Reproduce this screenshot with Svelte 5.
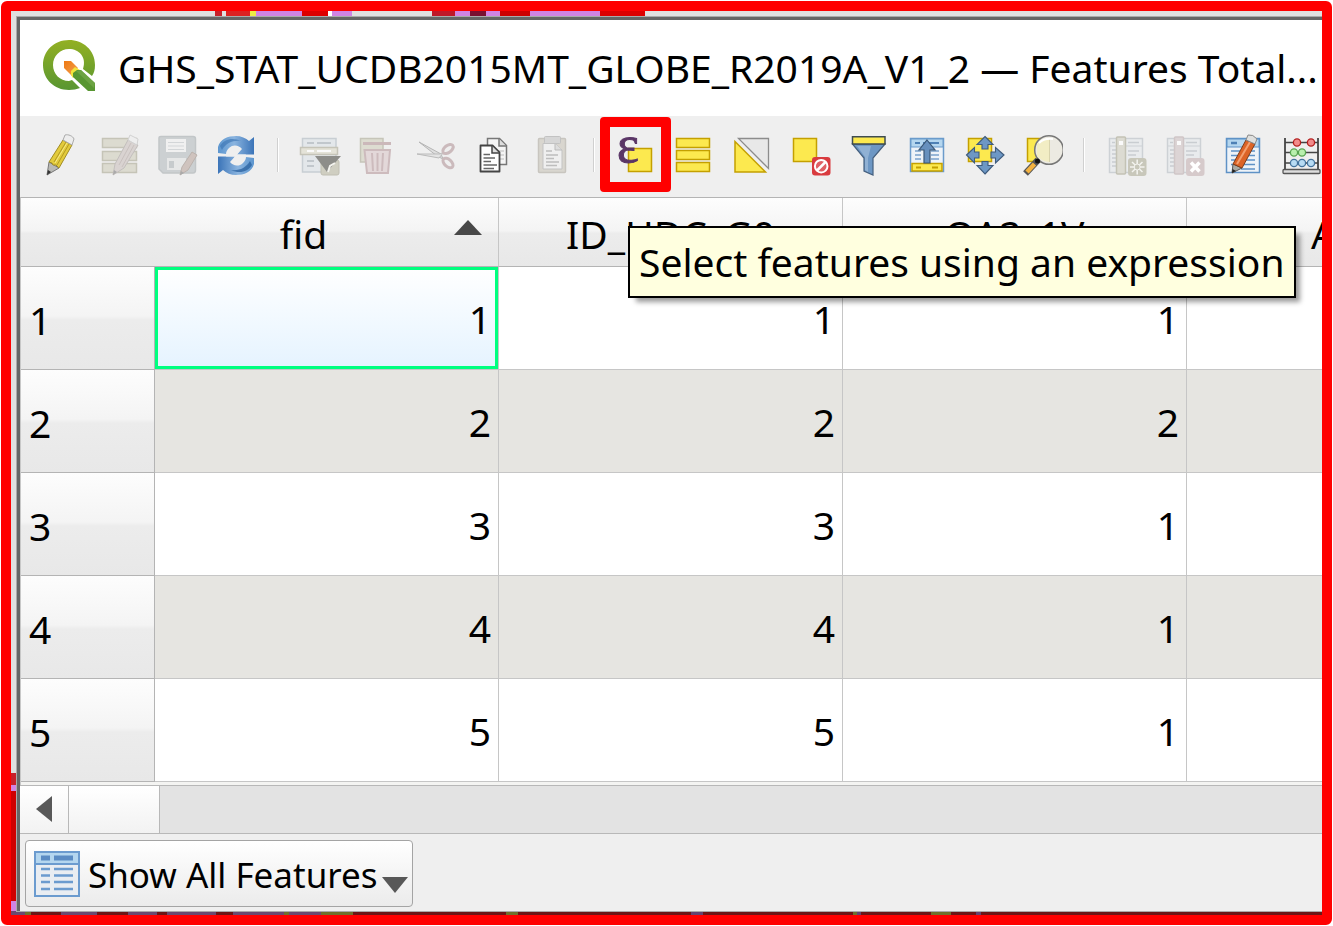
<script>
  const groups = [
    ['edit', 'multiedit', 'save', 'reload'],
    ['add', 'delete', 'cut', 'copy', 'paste'],
    ['expression', 'all', 'invert', 'deselect', 'filter', 'top', 'pan', 'zoom'],
    ['newfield', 'deletefield', 'form', 'calculator']
  ];
  const labels = {
    edit: 'Toggle editing mode', multiedit: 'Toggle multi edit mode', save: 'Save edits', reload: 'Reload the table',
    add: 'Add feature', delete: 'Delete selected features', cut: 'Cut', copy: 'Copy', paste: 'Paste',
    expression: 'Select features using an expression', all: 'Select all', invert: 'Invert selection',
    deselect: 'Deselect all', filter: 'Filter', top: 'Move selection to top', pan: 'Pan map to selected rows',
    zoom: 'Zoom map to selected rows', newfield: 'New field', deletefield: 'Delete field',
    form: 'Organize columns', calculator: 'Open field calculator'
  };
  const disabled = ['multiedit', 'save', 'add', 'delete', 'cut', 'paste', 'newfield', 'deletefield'];
  const rows = [
    [1, 1, 1, 1],
    [2, 2, 2, 2],
    [3, 3, 3, 1],
    [4, 4, 4, 1],
    [5, 5, 5, 1]
  ];
</script>

{#snippet icon(name)}
  <svg class="icon" viewBox="0 0 44 44" aria-hidden="true">
    {#if name === 'edit'}
      <path d="M8 42 10 29 20 35z" fill="#b9b9b5" stroke="#777" />
      <path d="M8 42 9 37 12 39z" fill="#333" />
      <path d="M10 29 24 7 33 12 20 35 17 32 14 32 13 30z" fill="#e3cb3c" stroke="#a18c25" />
      <path d="M15 29 27 9M18 32 30 11" stroke="#b39a24" />
      <path d="M16 30 28 10" stroke="#f7ea86" />
      <path d="M24 7 26 2C29 1 34 3 35 6L33 12z" fill="#ededed" stroke="#aaa" />
    {:else if name === 'multiedit'}
      <g fill="#dcdbd0" stroke="#c5c4b7" stroke-width="1.5">
        <path d="M5.500 5.500H39.500V14.500H5.500zM5.500 18.500H39.500V27.500H5.500zM5.500 30.500H39.500V39.500H5.500z" />
      </g>
      <path d="M16 42 18 31 31 7 41 12 27 35z" fill="#d9d3d1" stroke="#c3bfbd" />
      <path d="M22 32 34 10M25 34 37 12" stroke="#c9c1bf" />
      <path d="M16 42 17 37 20 39z" fill="#aaa" />
      <path d="M31 7 33 2 41 6 40 12z" fill="#eee" stroke="#d2d2d2" />
    {:else if name === 'save'}
      <path d="M4 5Q4 3.500 6 3.500H38Q40.500 3.500 40.500 6V37Q40.500 40 38 40H8L4 36z" fill="#ccd0d2" stroke="#c2c6c8" stroke-width="1.500" />
      <path d="M11 6H31V19H11z" fill="#f0f0f0" />
      <path d="M13 9.500H29M13 13H29M13 16.500H29" stroke="#d3d6d8" />
      <path d="M12 25H31V37H12z" fill="#e6e7e7" />
      <path d="M14 28H19V35H14z" fill="#c7cbcd" />
      <path d="M25 42 27 34 37 19 42 22 33 37z" fill="#cfc3be" stroke="#bbb2ad" />
      <path d="M25 42 26 38 29 40z" fill="#aaa" />
    {:else if name === 'reload'}
      <defs>
        <linearGradient id="sync" x1="0" y1="0" x2="1" y2="0">
          <stop offset="0" stop-color="#5d96cf" /><stop offset=".45" stop-color="#8ab4df" /><stop offset="1" stop-color="#3b74b8" />
        </linearGradient>
      </defs>
      <path d="M5 14C7 6 15 3 23 3 28 3 33 5 36 8L41 4V21.500H24L29 16C26 12 20 11 16 15 14 17 13 19 13 21L5 20z" fill="url(#sync)" />
      <path d="M7 13C11 6 20 4 28 8 20 7 13 10 9 17z" fill="#3c74b4" opacity=".65" />
      <g transform="rotate(180 23 22.500)">
        <path d="M5 14C7 6 15 3 23 3 28 3 33 5 36 8L41 4V21.500H24L29 16C26 12 20 11 16 15 14 17 13 19 13 21L5 20z" fill="url(#sync)" />
        <path d="M7 13C11 6 20 4 28 8 20 7 13 10 9 17z" fill="#28609f" opacity=".75" />
      </g>
      <path d="M16 16Q21 12 28 16L24 21.500H33Q30 31 18 30L22 23.500H13z" fill="#efefef" />
    {:else if name === 'add'}
      <path d="M5.500 5.500H39V39H5.500z" fill="#e3e7ea" stroke="#c8ced3" stroke-width="1.500" />
      <path d="M10 10H17M20 10H34M10 28H17M10 33H17" stroke="#c1c7cc" stroke-width="2" />
      <path d="M3.500 14.500H40.500V21.500H3.500z" fill="#e4e3d8" stroke="#c5c4b8" stroke-width="1.500" />
      <path d="M10 18H17M20 18H34" stroke="#fafafa" stroke-width="2" />
      <rect x="24" y="27" width="18" height="15" rx="2" fill="#cfcec1" stroke="#c0bfb2" />
      <path d="M18 23H44L30 39z" fill="#8d8d89" />
      <path d="M31 39 33 33 38 30" stroke="#f3f3ee" stroke-width="2" fill="none" />
    {:else if name === 'delete'}
      <path d="M5.500 5.500H28V29H5.500z" fill="#dddcd1" stroke="#c6c5b9" stroke-width="1.500" />
      <path d="M8 10.500H36" stroke="#cbb8ba" stroke-width="3" />
      <path d="M9.500 17H35L33 40H12z" fill="#e3d8d9" stroke="#cdbbbd" stroke-width="2" />
      <path d="M17 20 18 38M22.500 20V38M28 20 27 38" stroke="#cdbbbd" stroke-width="2" />
    {:else if name === 'cut'}
      <path d="M6 9 28 21 30 26 24 23z" fill="#dedede" stroke="#b5b5b5" />
      <path d="M4 21 27 21 31 19 26 25z" fill="#e4e4e4" stroke="#bbb" />
      <g fill="none" stroke="#cbbabc" stroke-width="3">
        <ellipse cx="35" cy="16" rx="6" ry="3.500" transform="rotate(-38 35 16)" />
        <ellipse cx="35" cy="30" rx="6" ry="3.500" transform="rotate(42 35 30)" />
      </g>
    {:else if name === 'copy'}
      <path d="M16.500 5.500H28.500L35.500 12.500V31.500H16.500z" fill="#f5f5f5" stroke="#777" stroke-width="1.500" />
      <path d="M28 6V13H35" fill="#ddd" stroke="#777" stroke-width="1.500" />
      <path d="M27 18H33M29 22H33M29 26H33" stroke="#bbb" />
      <path d="M9.500 12.500H21.500L28.500 19.500V38.500H9.500z" fill="#fff" stroke="#444" stroke-width="1.800" stroke-linejoin="round" />
      <path d="M21 13V20H28" fill="#ddd" stroke="#444" stroke-width="1.500" />
      <path d="M12.500 21.500H19M12.500 25H24M12.500 28.500H20M12.500 32H26M12.500 35.500H23" stroke="#666" stroke-width="1.300" />
    {:else if name === 'paste'}
      <rect x="9.500" y="5.500" width="27" height="34" rx="1" fill="#d9d6cf" stroke="#c8c5bf" stroke-width="1.500" />
      <path d="M14 10.500H26L33 17V36H14z" fill="#efefef" stroke="#c3c3c3" />
      <rect x="15.500" y="3.500" width="16" height="7" rx="1" fill="#d6d6d6" stroke="#c2c2c2" />
      <path d="M26 11V17H33" fill="#ddd" stroke="#bbb" />
      <path d="M17 18H23M17 22H29M17 25.500H25M17 29H30M17 32.500H28" stroke="#bdbdbd" stroke-width="1.300" />
    {:else if name === 'expression'}
      <path d="M15.500 15.500H38.500V38.500H15.500z" fill="#fce94f" stroke="#c4a000" stroke-width="1.500" />
      <text class="epsilon" x="4" y="29">ε</text>
    {:else if name === 'all'}
      <path d="M5.500 5.500H38.500V14.500H5.500zM5.500 17.500H38.500V26.500H5.500zM5.500 29.500H38.500V38.500H5.500z" fill="#fce94f" stroke="#c4a000" stroke-width="1.500" />
    {:else if name === 'invert'}
      <path d="M9.500 5.500H39.500V35.500z" fill="#e8e8e8" stroke="#8c8c8c" stroke-width="1.300" />
      <path d="M6 8.500V39H36.500z" fill="#fce94f" stroke="#c4a000" stroke-width="1.500" />
    {:else if name === 'deselect'}
      <path d="M6.500 5.500H29.500V28.500H6.500z" fill="#fce94f" stroke="#c4a000" stroke-width="1.500" />
      <rect x="25" y="24" width="18.500" height="18.500" rx="3" fill="#d93b3f" />
      <circle cx="34.200" cy="33.200" r="6.300" fill="#df6064" stroke="#fff" stroke-width="2" />
      <path d="M30 37.500 38.500 29" stroke="#fff" stroke-width="2.500" />
    {:else if name === 'filter'}
      <path d="M7.500 11 19 25V38L28 42V25L40 11z" fill="#6d97c4" stroke="#45607f" stroke-width="1.200" />
      <path d="M12 13H26L23 25V39L20 37V24z" fill="#a8c3e0" opacity=".6" />
      <path d="M7.500 3.800H40V11H7.500z" fill="#fce94f" stroke="#3f4c50" stroke-width="1.500" />
    {:else if name === 'top'}
      <path d="M7.500 5.500H40.500V38.500H7.500z" fill="#eef3f8" stroke="#6b9bcb" stroke-width="1.500" />
      <path d="M8 6H40V14H8z" fill="#b4d6ef" stroke="#6b9bcb" />
      <path d="M12 10H17M20 10H36" stroke="#4d80b5" stroke-width="2" />
      <path d="M12 18H18M28 18H36M12 22H18M28 22H36M12 26H18M28 26H36" stroke="#7ba2cb" stroke-width="1.500" />
      <path d="M9 30.500H39V38H9z" fill="#fce94f" stroke="#c4a000" stroke-width="1.500" />
      <path d="M13 34.500H18M29 34.500H35" stroke="#c4a000" stroke-width="2" />
      <path d="M24 7 32 17H27V30H21V17H16z" fill="#6790bd" stroke="#3b5877" stroke-width="1.200" />
    {:else if name === 'pan'}
      <path d="M7.500 5.500H30.500V28.500H7.500z" fill="#fce94f" stroke="#c4a000" stroke-width="1.500" />
      <g fill="#6d97c4" stroke="#3f5b7c" stroke-width="1.100">
        <path d="M24 3.500 32 11.500H27V16H21V11.500H16z" />
        <path d="M24 41 32 32.500H27V28.500H21V32.500H16z" />
        <path d="M5.500 22 13.500 14.500V19H18V25H13.500V30z" />
        <path d="M43 22 34.500 14.500V19H30V25H34.500V30z" />
      </g>
    {:else if name === 'zoom'}
      <path d="M8.500 5.500H31.500V28.500H8.500z" fill="#fce94f" stroke="#c4a000" stroke-width="1.500" />
      <path d="M19 27 6.500 40.500" stroke="#555" stroke-width="6.500" />
      <path d="M15.500 31 8 39" stroke="#f3b240" stroke-width="4.500" />
      <circle cx="30" cy="17" r="14.300" fill="#eceae2" stroke="#777" stroke-width="1.500" />
      <path d="M18 11Q23 4 30 5V29Q22 28 18 23z" fill="#f2edc4" />
      <path d="M30 5H31V29H30z" fill="#d8d3ad" />
      <path d="M20 10Q25 5 34 6" stroke="#fff" stroke-width="2" fill="none" />
      <circle cx="18.500" cy="28" r="2.500" fill="#111" />
    {:else if name === 'newfield' || name === 'deletefield'}
      <path d="M6.500 5.500H39.500V39.500H6.500z" fill="#e9ebed" stroke="#cdd1d5" stroke-width="1.500" />
      <path d="M7 13H39" stroke="#cdd1d5" />
      <path d="M25 9.500H36M9 9.500H12M9 17H13M9 21H13M9 25H13M9 29H13M9 33H13M25 18H36M25 22H33" stroke="#c9cdd1" stroke-width="1.500" />
      {#if name === 'newfield'}
        <rect x="13.500" y="4" width="9" height="37" rx="1" fill="#dcdbd2" stroke="#c3c2b5" stroke-width="1.500" />
        <rect x="25" y="25" width="18.500" height="18" rx="3" fill="#c8c7ba" />
        <path d="M34.200 26.500V41.500M27 34H41.500M29 29 39.500 39M39.500 29 29 39" stroke="#f4f4f0" stroke-width="1.500" />
        <circle cx="34.200" cy="34" r="3" fill="#c8c7ba" stroke="#f4f4f0" />
      {:else}
        <rect x="13.500" y="4" width="9" height="37" rx="1" fill="#dcd4d5" stroke="#d0c6c7" stroke-width="1.500" />
        <rect x="25" y="25" width="18.500" height="18" rx="3" fill="#d6cacb" />
        <path d="M30 29.500 38.500 38.500M38.500 29.500 30 38.500" stroke="#fff" stroke-width="3.500" />
      {/if}
      <path d="M16 8H20V12H16z" fill="#fafafa" />
    {:else if name === 'form'}
      <path d="M7.500 5.500H40.500V39.500H7.500z" fill="#eef3f8" stroke="#5f92c6" stroke-width="1.500" />
      <path d="M8 6H40V14H8z" fill="#b4d6ef" stroke="#5f92c6" />
      <path d="M12 10H18" stroke="#4d80b5" stroke-width="2.500" />
      <path d="M12 18H21M31 18H36M12 22.500H19M29 22.500H36M12 27H17M26 27H36M12 31.500H15M25 31.500H36M22 36H36" stroke="#5f92c6" stroke-width="1.500" />
      <path d="M13 40 14 31 23 35z" fill="#a9aaa5" stroke="#555" />
      <path d="M13 40 13.500 36 17 38z" fill="#222" />
      <path d="M14 31 27 7 36 11 23 35z" fill="#dc6427" stroke="#7d3c19" />
      <path d="M18 31 31 9" stroke="#f3a070" stroke-width="2" />
      <path d="M27 7 29 2Q34 1 38 6L36 11z" fill="#dfdfdd" stroke="#888" />
    {:else if name === 'calculator'}
      <path d="M8 5V37M41 5V37" stroke="#555" stroke-width="2" />
      <path d="M8 9.500H41M8 19.500H41M8 30H41" stroke="#444" stroke-width="1.500" />
      <rect x="6" y="36.500" width="37" height="4" rx="1" fill="#ddd" stroke="#555" stroke-width="1.300" />
      <g fill="#f28b8b" stroke="#b51f1f" stroke-width="1.300"><circle cx="20" cy="9.500" r="3.600" /><circle cx="34" cy="9.500" r="3.600" /></g>
      <g fill="#b9f0ae" stroke="#59a552" stroke-width="1.300"><circle cx="17" cy="19.500" r="3.600" /><circle cx="25" cy="19.500" r="3.600" /></g>
      <g fill="#b8dcf4" stroke="#45749d" stroke-width="1.300"><circle cx="17" cy="30" r="3.600" /><circle cx="25" cy="30" r="3.600" /><circle cx="34" cy="30" r="3.600" /></g>
    {/if}
  </svg>
{/snippet}

<main class="frame">
  <section class="window">
    <header class="titlebar">
      <svg class="logo" viewBox="0 0 54 54" aria-hidden="true">
        <defs>
          <linearGradient id="ring" x1="0" y1="0" x2="0" y2="1">
            <stop offset="0" stop-color="#93b023" /><stop offset="1" stop-color="#589632" />
          </linearGradient>
          <linearGradient id="tip" x1="0" y1="0" x2="1" y2="1">
            <stop offset="0" stop-color="#ee7913" /><stop offset="1" stop-color="#f3a050" />
          </linearGradient>
        </defs>
        <path d="M27 1C41 1 53 11 53 26 53 31 52 34 50 37L41 30C45 18 37 10 27 10 18 10 11 17 11 26 11 35 18 42 27 42L30 41 38 49C35 50 31 51 27 51 12 51 1 40 1 26 1 12 12 1 27 1z" fill="url(#ring)" />
        <path d="M22 22H29L36 29 30 37 22 29z" fill="url(#tip)" />
        <path d="M29 36V32L33 28 38 31 31 39z" fill="#f2e33c" />
        <path d="M31 38V34L35 31H39L53 44V52H46z" fill="#589632" />
        <path d="M34 32 39 31 53 44 52 49z" fill="#7aab4f" opacity=".6" />
      </svg>
      <h1>GHS_STAT_UCDB2015MT_GLOBE_R2019A_V1_2 — Features Total...</h1>
    </header>

    <div class="toolbar" role="toolbar" aria-label="Attribute table">
      {#each groups as group, g}
        {#if g > 0}<span class="separator"></span>{/if}
        {#each group as name}
          <div class="tool" class:marked={name === 'expression'}>
            <button type="button" aria-label={labels[name]} disabled={disabled.includes(name)}>{@render icon(name)}</button>
            {#if name === 'expression'}
              <div class="tooltip" role="tooltip">Select features using an expression</div>
            {/if}
          </div>
        {/each}
      {/each}
    </div>

    <div class="grid">
      <table>
        <colgroup><col class="index" /><col class="field" /><col class="field" /><col class="field" /><col /></colgroup>
        <thead>
          <tr>
            <th></th>
            <th class="sorted" aria-sort="ascending">fid<span class="arrow-up"></span></th>
            <th>ID_HDC_G0</th>
            <th>QA2_1V</th>
            <th class="cut-off">A</th>
          </tr>
        </thead>
        <tbody>
          {#each rows as [index, ...values], r}
            <tr>
              <th scope="row">{index}</th>
              {#each values as value, c}
                <td class:current={r === 0 && c === 0}>{value}</td>
              {/each}
              <td></td>
            </tr>
          {/each}
        </tbody>
      </table>
    </div>

    <div class="scrollbar">
      <button type="button" aria-label="Scroll left"><span class="arrow-left"></span></button>
      <div class="thumb"></div>
    </div>

    <footer>
      <button type="button" class="show-all">
        <svg viewBox="0 0 46 46" aria-hidden="true">
          <path d="M1 1H45V45H1z" fill="#e9edf2" stroke="#6b9bcf" stroke-width="2" />
          <path d="M1 1H45V13H1z" fill="#b4d6ef" stroke="#6b9bcf" stroke-width="2" />
          <path d="M7 7H16M20 7H39" stroke="#5b8cc4" stroke-width="5" />
          <path d="M7 18H16M20 18H39M7 24.500H16M20 24.500H39M7 31H16M20 31H39M7 38H16M20 38H39" stroke="#6b9bcf" stroke-width="2.500" />
        </svg>
        <span>Show All Features</span>
        <i class="arrow-down"></i>
      </button>
    </footer>
  </section>
</main>

<style>
  :global(body) {
    background: #fff;
  }
  .frame {
    box-sizing: border-box;
    margin: 1px;
    min-height: calc(100vh - 2px);
    border: 10px solid #f00;
    border-radius: 6px;
    padding: 6px 0 4px 6px;
    display: flex;
    overflow: hidden;
    background:
      linear-gradient(90deg, transparent 215px, #c8202a 215px 222px, transparent 222px 226px, #d22 226px 250px, #ee4 250px 256px, #d184e4 256px 302px, #d00 302px 328px, #fff 328px 332px, #d184e4 332px 352px, transparent 352px 432px, #c01828 432px 455px, #d184e4 455px 470px, #7a1030 470px 486px, #d184e4 486px 500px, #c00 500px 530px, #d184e4 530px 600px, #d00 600px 645px, transparent 645px) -11px 0 / 100% 5px no-repeat,
      linear-gradient(90deg, #6b4a70 14px, #70702c 14px 20px, #6d1616 20px 50px, #6b4a70 50px 86px, #6d1616 86px 117px, #6b4a70 117px 146px, #6d1616 146px 156px, #6b4a70 156px 205px, #6d1616 205px 222px, #6b4a70 222px 273px, #70702c 273px 278px, #6b4a70 278px 310px, #70702c 310px 342px, #6d1616 342px 495px, #70702c 495px 507px, #6d1616 507px 680px, #644370 680px 692px, #6d1616 692px 842px, #70702c 842px 846px, #644370 846px 850px, #6d1616 850px 920px, #70702c 920px 940px, #6d1616 940px 965px, #644370 965px 970px, #6d1616 970px) 0 100% / 100% 4px no-repeat,
      linear-gradient(#c8202a 12px, #d184e4 12px 18px, #d00000 18px 128px, #d184e4 128px) 0 100% / 6px 142px no-repeat,
      #e0e0e0;
    font-family: "Noto Sans", "Open Sans", sans-serif;
    color: #000;
  }
  .window {
    flex: 1;
    min-width: 0;
    display: flex;
    flex-direction: column;
    border: 3px solid #666;
    border-width: 3px 0 0 3px;
    box-shadow: 0 0 0 1px #aaa;
    background: #efefef;
  }
  .titlebar {
    display: flex;
    align-items: center;
    gap: 22px;
    height: 96px;
    padding-left: 22px;
    background: #fff;
  }
  .logo {
    flex: none;
    width: 54px;
    height: 54px;
    margin-bottom: 4px;
  }
  h1 {
    margin: 0;
    font-size: 39px;
    font-weight: 400;
    line-height: 56px;
    white-space: nowrap;
  }
  .toolbar {
    display: flex;
    align-items: center;
    height: 77px;
    padding: 0 0 4px 12px;
  }
  .tool {
    position: relative;
    flex: none;
  }
  .tool button {
    display: grid;
    place-items: center;
    width: 58px;
    height: 58px;
    padding: 0;
    border: 0;
    background: none;
  }
  .icon {
    width: 44px;
    height: 44px;
    fill: none;
  }
  .epsilon {
    font: 400 52px "Liberation Serif", serif;
    fill: #5a3566;
    stroke: #5a3566;
    stroke-width: 1;
  }
  .separator {
    flex: none;
    box-sizing: border-box;
    width: 2px;
    height: 34px;
    margin: 0 11px 0 13px;
    border-left: 1px solid #d0d0d0;
    background: #fff;
  }
  .marked::after {
    content: "";
    position: absolute;
    inset: -9px -7px -8px -6px;
    border: 10px solid #f00;
    border-radius: 4px;
  }
  .tooltip {
    position: absolute;
    z-index: 2;
    top: 100px;
    left: 22px;
    padding: 8px 9px;
    border: 2px solid #000;
    background: #ffffdf;
    box-shadow: 6px 6px 5px -2px rgb(0 0 0 / 40%);
    font-size: 39px;
    line-height: 52px;
    white-space: nowrap;
  }
  .grid {
    overflow: hidden;
    padding-bottom: 3px;
    border-top: 1px solid #b4b4b4;
    border-left: 1px solid #c8c8c8;
    background: #f4f4f2;
  }
  table {
    width: 100%;
    table-layout: fixed;
    border-collapse: separate;
    border-spacing: 0;
    font-size: 39px;
    line-height: 56px;
  }
  .index {
    width: 134px;
  }
  .field {
    width: 344px;
  }
  th,
  td {
    box-sizing: border-box;
    height: 103px;
    padding: 4px 7px 0;
    border: solid #c6c6c6;
    border-width: 0 1px 1px 0;
    font-weight: 400;
    overflow: hidden;
  }
  th {
    border-color: #b4b4b4;
    background: linear-gradient(#fdfdfd, #f4f4f4 48%, #ececec 52%, #e8e8e8);
  }
  td:last-child,
  th:last-child,
  thead th:first-child {
    border-right-width: 0;
  }
  thead th {
    height: 69px;
    border-right-color: #c6c6c6;
    text-align: center;
  }
  thead th.cut-off {
    padding-left: 124px;
    padding-right: 0;
    text-align: left;
  }
  tbody th {
    padding-left: 8px;
    text-align: left;
  }
  td {
    padding-top: 2px;
    background: #fff;
    text-align: right;
  }
  tr:nth-child(even) td {
    background: #e6e5e1;
  }
  td.current {
    background: linear-gradient(#fff, #e5f3ff);
    box-shadow: inset 0 0 0 3px #00ff7f;
  }
  thead th.sorted {
    position: relative;
    padding-right: 53px;
  }
  .arrow-up {
    position: absolute;
    top: 22px;
    right: 16px;
    border: solid transparent;
    border-width: 0 14px 15px;
    border-bottom-color: #484848;
  }
  .scrollbar {
    display: flex;
    height: 47px;
    border: solid #b8b8b8;
    border-width: 1px 0;
    background: #e3e3e3;
  }
  .scrollbar button,
  .thumb {
    box-sizing: border-box;
    border: solid #b8b8b8;
    border-width: 0 1px 0 0;
    background: linear-gradient(#fff, #f2f2f2);
  }
  .scrollbar button {
    display: grid;
    place-items: center;
    width: 49px;
    padding: 0 0 2px;
  }
  .thumb {
    width: 91px;
  }
  .arrow-left {
    border: solid transparent;
    border-width: 13px 16px 13px 0;
    border-right-color: #585858;
  }
  footer {
    flex: 1;
    padding: 6px 5px 4px;
  }
  .show-all {
    display: flex;
    align-items: center;
    gap: 8px;
    height: 67px;
    padding: 0 4px 0 8px;
    border: 1px solid #a4a4a4;
    border-radius: 4px;
    background: linear-gradient(#fff, #ebebeb);
    color: #000;
    font-family: inherit;
    font-size: 35px;
    line-height: 56px;
    white-space: nowrap;
  }
  .show-all svg {
    width: 46px;
    height: 46px;
  }
  .show-all span {
    margin-top: 3px;
  }
  .arrow-down {
    margin: 22px 0 0 -4px;
    border: solid transparent;
    border-width: 16px 13px 0;
    border-top-color: #585858;
  }
</style>
